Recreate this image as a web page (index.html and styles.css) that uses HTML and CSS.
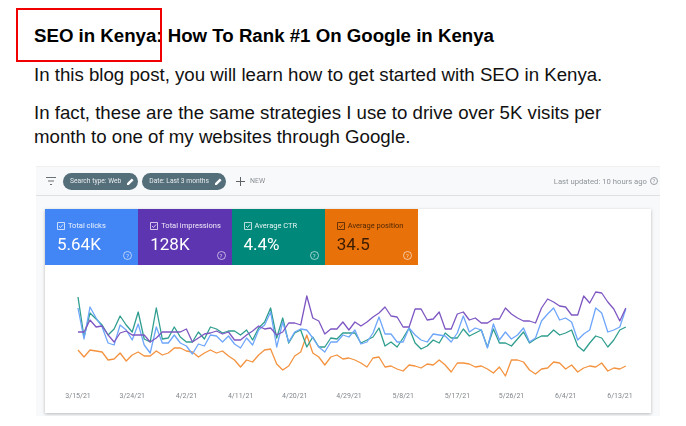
FILE: index.html
```html
<!DOCTYPE html>
<html lang="en">
<head>
    <meta charset="UTF-8">
    <meta name="viewport" content="width=device-width, initial-scale=1.0">
    <title>SEO in Kenya</title>
    <link rel="stylesheet" href="styles.css">
</head>
<body>
    <!-- Red highlight drawn over the heading -->
    <div class="highlight"></div>

    <div class="post">
        <h1>SEO in Kenya: How To Rank #1 On Google in Kenya</h1>
        <p>In this blog post, you will learn how to get started with SEO in Kenya.</p>
        <p>In fact, these are the same strategies I use to drive over 5K visits per month to one of my websites through Google.</p>

        <!-- Search Console screenshot -->
        <div class="shot">
            <div class="toolbar">
                <svg class="filter-icon" width="12" height="10" viewBox="0 0 12 10">
                    <path d="M1 1.5h10M3 5h6M5 8.5h2" stroke="#6b7075" stroke-width="1.2" fill="none"/>
                </svg>
                <span class="chip">Search type: Web
                    <svg width="7" height="7" viewBox="0 0 8 8"><path d="M0 8V6L5.500.5l2 2L2 8z" fill="#fff"/></svg>
                </span>
                <span class="chip">Date: Last 3 months
                    <svg width="7" height="7" viewBox="0 0 8 8"><path d="M0 8V6L5.500.5l2 2L2 8z" fill="#fff"/></svg>
                </span>
                <svg class="plus-icon" width="9" height="9" viewBox="0 0 9 9">
                    <path d="M4.500 0v9M0 4.500h9" stroke="#5f6368" stroke-width="1"/>
                </svg>
                <span class="new">NEW</span>
                <span class="updated">Last updated: 10 hours ago</span>
                <span class="help-dark">?</span>
            </div>

            <div class="shot-body">
                <div class="card">
                    <div class="tiles">
                        <div class="tile tile-blue">
                            <div class="tile-label">
                                <svg class="check" width="8" height="8" viewBox="0 0 8 8"><path d="M.5.500h7v7h-7zM2 4l1.500 1.500L6 2.500"/></svg>
                                Total clicks
                            </div>
                            <div class="tile-value">5.64K</div>
                            <span class="help">?</span>
                        </div>
                        <div class="tile tile-purple">
                            <div class="tile-label">
                                <svg class="check" width="8" height="8" viewBox="0 0 8 8"><path d="M.5.500h7v7h-7zM2 4l1.500 1.500L6 2.500"/></svg>
                                Total impressions
                            </div>
                            <div class="tile-value">128K</div>
                            <span class="help">?</span>
                        </div>
                        <div class="tile tile-teal">
                            <div class="tile-label">
                                <svg class="check" width="8" height="8" viewBox="0 0 8 8"><path d="M.5.500h7v7h-7zM2 4l1.500 1.500L6 2.500"/></svg>
                                Average CTR
                            </div>
                            <div class="tile-value">4.4%</div>
                            <span class="help">?</span>
                        </div>
                        <div class="tile tile-orange">
                            <div class="tile-label">
                                <svg class="check" width="8" height="8" viewBox="0 0 8 8"><path d="M.5.500h7v7h-7zM2 4l1.500 1.500L6 2.500"/></svg>
                                Average position
                            </div>
                            <div class="tile-value">34.5</div>
                            <span class="help">?</span>
                        </div>
                    </div>

                    <svg id="chart" class="chart" width="606" height="123" viewBox="45 265 606 123"></svg>

                    <div class="axis">
                        <span>3/15/21</span>
                        <span>3/24/21</span>
                        <span>4/2/21</span>
                        <span>4/11/21</span>
                        <span>4/20/21</span>
                        <span>4/29/21</span>
                        <span>5/8/21</span>
                        <span>5/17/21</span>
                        <span>5/26/21</span>
                        <span>6/4/21</span>
                        <span>6/13/21</span>
                    </div>
                </div>
            </div>
        </div>
    </div>

    <script src="chart.js"></script>
</body>
</html>
```

FILE: styles.css
```css
body {
    font-family: "Liberation Sans", Arial, sans-serif;
    margin: 0;
    padding: 0;
    background-color: #ffffff;
    color: #111111;
    overflow: hidden;
}
.highlight {
    position: absolute;
    left: 16px;
    top: 8px;
    width: 142px;
    height: 50px;
    border: 2px solid #f00000;
}
.post {
    padding: 26px 0 0 34px;
}
h1 {
    margin: 0 0 17px;
    font-size: 18.667px;
    line-height: 20px;
    color: #000000;
}
p {
    margin: 0 0 14px;
    width: 580px;
    font-size: 18.667px;
    line-height: 24px;
}

/* Screenshot */
.shot {
    margin: 17px 0 0 2px;
    width: 624px;
    height: 250px;
    background: #f8f9fa;
    font-family: Roboto, sans-serif;
    filter: blur(0.5px);
}
.toolbar {
    display: flex;
    align-items: center;
    height: 30px;
    padding: 0 2px 0 9px;
    box-sizing: border-box;
    border-top: 1px solid #f0f0f0;
    border-bottom: 1px solid #e0e0e0;
}
.filter-icon {
    margin-right: 6px;
}
.chip {
    display: flex;
    align-items: center;
    justify-content: space-between;
    height: 17px;
    padding: 0 4px 0 7px;
    margin-right: 4px;
    border-radius: 9px;
    background: #546e7a;
    color: #e8ecee;
    font-size: 6.700px;
    gap: 6px;
}
.plus-icon {
    margin: 0 5px 0 6px;
}
.new {
    font-size: 7px;
    color: #8a9096;
}
.updated {
    margin-left: auto;
    font-size: 7.700px;
    color: #8f9499;
}
.help-dark {
    width: 6px;
    height: 6px;
    margin-left: 3px;
    border: 1px solid #9aa0a6;
    border-radius: 50%;
    color: #9aa0a6;
    font-size: 6px;
    line-height: 6px;
    text-align: center;
}
.shot-body {
    padding: 13px 9px 0;
}
.card {
    height: 204px;
    background: #ffffff;
    box-shadow: 0 1px 3px rgba(60, 64, 67, 0.35);
}

/* Metric tiles */
.tiles {
    display: flex;
    width: 373px;
    height: 56px;
}
.tile {
    position: relative;
    flex: 1;
    padding: 12px 0 0 12px;
    color: #ffffff;
}
.tile-blue { background: #4285f4; }
.tile-purple { background: #5e35b1; }
.tile-teal { background: #00897b; }
.tile-orange { background: #e8710a; color: #3a1c02; }
.tile-label {
    display: flex;
    align-items: center;
    gap: 3px;
    font-size: 7.500px;
    line-height: 10px;
    opacity: 0.9;
}
.check {
    fill: none;
    stroke: currentColor;
    stroke-width: 0.8;
}
.tile-value {
    margin-top: 3px;
    font-size: 17px;
    line-height: 20px;
}
.help {
    position: absolute;
    right: 6px;
    bottom: 5px;
    width: 7px;
    height: 7px;
    border: 1px solid rgba(255, 255, 255, 0.6);
    border-radius: 50%;
    color: rgba(255, 255, 255, 0.7);
    font-size: 6px;
    line-height: 7px;
    text-align: center;
}

/* Chart */
.chart {
    display: block;
}
.chart polyline {
    fill: none;
    stroke-width: 1.3;
    stroke-linejoin: round;
}
.axis {
    display: flex;
    padding-left: 6px;
    height: 16px;
}
.axis span {
    width: 54.200px;
    font-size: 7px;
    line-height: 16px;
    color: #80868b;
    text-align: center;
}
```

FILE: chart.js
```js
// y values read off the chart, one point per day
const series = [
    { color: "#f4933f", y: [350,357,350,351,352,360,359,353,361,355,352,356,356,351,355,353,348,348,351,352,357,353,350,353,351,356,360,367,360,362,355,350,349,364,370,366,356,352,335,353,357,365,357,355,359,358,360,363,367,358,357,367,366,369,371,365,366,368,364,365,360,365,372,363,363,364,367,366,369,373,367,376,360,360,362,370,374,369,368,362,363,369,365,372,368,366,367,363,371,368,369,366] },
    { color: "#2f9e8f", y: [297,337,313,319,325,335,329,316,325,332,312,339,342,308,339,338,327,337,342,342,332,339,327,329,333,331,331,335,330,340,328,322,308,338,318,343,333,330,347,337,347,347,338,339,333,333,333,343,340,337,328,346,342,347,338,328,343,349,346,340,343,333,338,338,329,336,333,330,347,329,343,343,346,339,332,343,339,336,336,330,335,333,330,346,351,343,336,338,347,340,330,327] },
    { color: "#6ea6fb", y: [308,339,307,318,327,343,345,325,330,340,324,345,353,327,343,343,335,343,346,354,344,346,335,336,342,336,344,348,338,345,330,325,312,347,322,342,332,329,330,338,347,352,342,342,335,337,330,344,342,333,317,334,334,342,342,328,335,340,342,334,335,336,342,333,316,332,328,330,348,324,340,332,339,335,328,342,338,321,314,308,320,318,322,340,334,330,308,313,332,330,327,309] },
    { color: "#7e57c2", y: [332,332,320,327,326,335,342,333,331,335,335,335,342,338,332,332,332,332,329,342,338,334,333,331,334,332,340,340,335,331,326,329,328,335,332,323,323,325,296,318,321,334,329,329,322,330,322,326,322,317,313,307,316,317,327,327,309,309,320,319,312,329,329,314,312,320,318,323,323,319,319,308,314,318,321,321,323,308,299,302,306,307,315,315,296,303,292,293,302,309,321,308] }
];

const chart = document.getElementById("chart");

series.forEach(function(line) {
    const points = line.y.map((y, i) => (78 + i * 6.02).toFixed(1) + "," + y).join(" ");
    const el = document.createElementNS("http://www.w3.org/2000/svg", "polyline");
    el.setAttribute("points", points);
    el.setAttribute("stroke", line.color);
    chart.appendChild(el);
});
```
